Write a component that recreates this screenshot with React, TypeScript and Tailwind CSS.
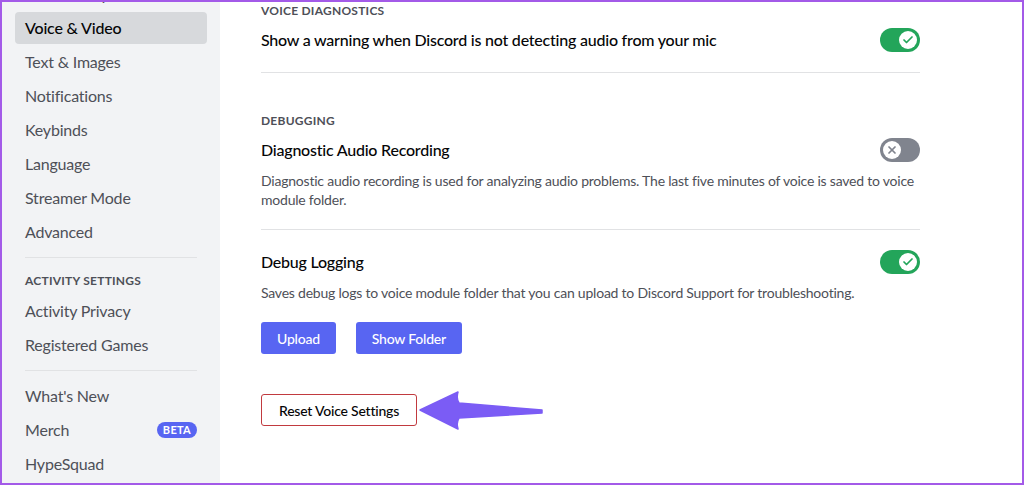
import { Check, X } from 'lucide-react';

const font = { fontFamily: 'Lato, "Noto Sans", sans-serif' };

function Toggle({ on }: { on: boolean }) {
  return (
    <div
      className={`relative w-10 h-6 rounded-full shrink-0 ${on ? 'bg-[#23a55a]' : 'bg-[#80848e]'}`}
    >
      <div
        className={`absolute top-[3px] w-[18px] h-[18px] rounded-full bg-white flex items-center justify-center ${
          on ? 'left-[19px]' : 'left-[3px]'
        }`}
      >
        {on ? (
          <Check className="w-3 h-3 text-[#23a55a]" strokeWidth={3.5} />
        ) : (
          <X className="w-3 h-3 text-[#80848e]" strokeWidth={3.5} />
        )}
      </div>
    </div>
  );
}

function NavItem({ label, active, badge }: { label: string; active?: boolean; badge?: string }) {
  return (
    <div
      className={`h-8 mb-[2px] px-[10px] rounded flex items-center justify-between text-[16px] ${
        active ? 'bg-[#d7d9dc] text-[#060607] font-medium' : 'text-[#4e5058]'
      }`}
    >
      <span>{label}</span>
      {badge && (
        <span className="h-4 px-[6px] rounded-full bg-[#5865f2] text-white text-[11px] font-bold leading-4 tracking-wide">
          {badge}
        </span>
      )}
    </div>
  );
}

function Divider() {
  return <div className="mx-[10px] my-[9px] h-px bg-[#e1e2e4]" />;
}

export default function App() {
  return (
    <div
      style={font}
      className="relative w-[1024px] h-[485px] overflow-hidden flex border-2 border-[#a35ae8] bg-white"
    >
      {/* Sidebar */}
      <div className="w-[218px] bg-[#f2f3f5] shrink-0 tracking-[-0.2px]">
        <div className="-mt-[24px] ml-[13px] w-[192px]">
          <NavItem label="Accessibility" />
          <NavItem label="Voice & Video" active />
          <NavItem label="Text & Images" />
          <NavItem label="Notifications" />
          <NavItem label="Keybinds" />
          <NavItem label="Language" />
          <NavItem label="Streamer Mode" />
          <NavItem label="Advanced" />
          <Divider />
          <div className="px-[10px] pt-[6px] pb-[6px] text-[12px] leading-4 font-bold uppercase text-[#4e5058] tracking-[0.02em]">
            Activity Settings
          </div>
          <NavItem label="Activity Privacy" />
          <NavItem label="Registered Games" />
          <Divider />
          <NavItem label="What's New" />
          <NavItem label="Merch" badge="BETA" />
          <NavItem label="HypeSquad" />
        </div>
      </div>

      {/* Main */}
      <div className="flex-1 pl-[41px] pt-[1px] tracking-[-0.22px]">
        <div className="w-[659px]">
          <div className="text-[12px] leading-4 font-bold uppercase text-[#4e5058] tracking-[0.02em]">
            Voice Diagnostics
          </div>
          <div className="mt-[9px] flex items-center justify-between">
            <span className="text-[16px] leading-5 text-[#060607] font-medium">
              Show a warning when Discord is not detecting audio from your mic
            </span>
            <Toggle on />
          </div>
          <div className="mt-5 h-px bg-[#e1e2e4]" />

          <div className="mt-10 text-[12px] leading-4 font-bold uppercase text-[#4e5058] tracking-[0.02em]">
            Debugging
          </div>
          <div className="mt-[9px] flex items-center justify-between">
            <span className="text-[16px] leading-5 text-[#060607] font-medium">Diagnostic Audio Recording</span>
            <Toggle on={false} />
          </div>
          <p className="mt-[9px] text-[14px] leading-[19px] text-[#4e5058]">
            Diagnostic audio recording is used for analyzing audio problems. The last five minutes of voice is saved to
            voice module folder.
          </p>
          <div className="mt-5 h-px bg-[#e1e2e4]" />

          <div className="mt-5 flex items-center justify-between">
            <span className="text-[16px] leading-5 text-[#060607] font-medium">Debug Logging</span>
            <Toggle on />
          </div>
          <p className="mt-[9px] text-[14px] leading-[19px] text-[#4e5058]">
            Saves debug logs to voice module folder that you can upload to Discord Support for troubleshooting.
          </p>
          <div className="mt-5 flex gap-5">
            <button className="h-8 px-4 rounded-[3px] bg-[#5865f2] text-white text-[14px] font-medium">Upload</button>
            <button className="h-8 px-4 rounded-[3px] bg-[#5865f2] text-white text-[14px] font-medium">
              Show Folder
            </button>
          </div>

          <div className="relative mt-10 w-fit">
            <button className="h-8 px-[17px] rounded-[3px] border border-[#c13a3f] bg-white text-[#060607] text-[14px] font-medium">
              Reset Voice Settings
            </button>
            {/* annotation arrow */}
            <svg
              className="absolute left-[157px] top-[-3px]"
              width="130"
              height="40"
              viewBox="0 0 130 40"
            >
              <path
                d="M2 19 L40 1 Q38 7 41 12 L124 19 L124 22 L41 27 Q38 32 40 38 Z"
                fill="#7b5cf5"
                strokeLinejoin="round"
                stroke="#7b5cf5"
                strokeWidth="1.5"
              />
            </svg>
          </div>
        </div>
      </div>
    </div>
  );
}
